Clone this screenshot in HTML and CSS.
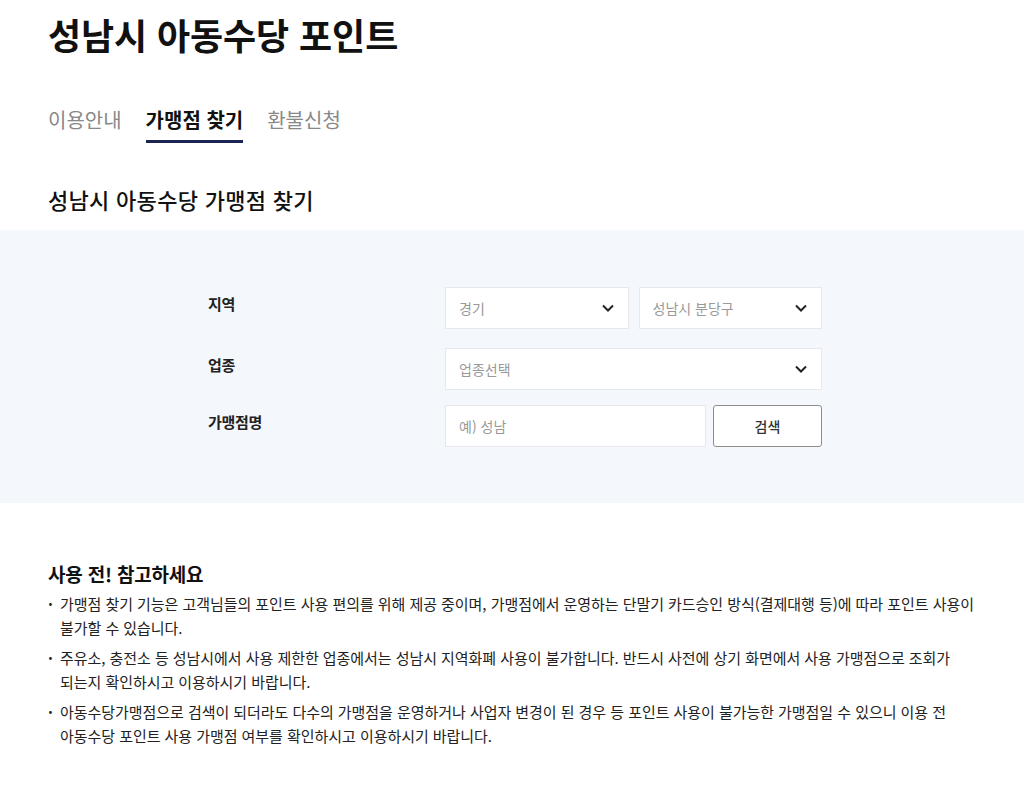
FILE: index.html
```html
<!DOCTYPE html>
<html lang="ko">
<head>
<meta charset="utf-8">
<title>성남시 아동수당 포인트</title>
<link rel="stylesheet" href="styles.css">
</head>
<body>
<div class="wrap">
  <h1 class="title">성남시 아동수당 포인트</h1>
  <nav class="tabs">
    <a class="tab">이용안내</a>
    <a class="tab active">가맹점 찾기</a>
    <a class="tab">환불신청</a>
  </nav>
  <h2 class="subtitle">성남시 아동수당 가맹점 찾기</h2>
</div>
<section class="band">
  <form class="form">
    <div class="row r1">
      <div class="label">지역</div>
      <div class="controls">
        <div class="select half"><span>경기</span><svg class="chev" viewBox="0 0 12 8"><path d="M1 1.5 6 6.5 11 1.5"/></svg></div>
        <div class="select half"><span>성남시 분당구</span><svg class="chev" viewBox="0 0 12 8"><path d="M1 1.5 6 6.5 11 1.5"/></svg></div>
      </div>
    </div>
    <div class="row r2">
      <div class="label">업종</div>
      <div class="controls">
        <div class="select full"><span>업종선택</span><svg class="chev" viewBox="0 0 12 8"><path d="M1 1.5 6 6.5 11 1.5"/></svg></div>
      </div>
    </div>
    <div class="row r3">
      <div class="label">가맹점명</div>
      <div class="controls tight">
        <div class="input"><span>예) 성남</span></div>
        <button type="button" class="btn">검색</button>
      </div>
    </div>
  </form>
</section>
<div class="wrap notes">
  <h3 class="notes-title">사용 전! 참고하세요</h3>
  <ul class="list">
    <li>가맹점 찾기 기능은 고객님들의 포인트 사용 편의를 위해 제공 중이며, 가맹점에서 운영하는 단말기 카드승인 방식(결제대행 등)에 따라 포인트 사용이 불가할 수 있습니다.</li>
    <li>주유소, 충전소 등 성남시에서 사용 제한한 업종에서는 성남시 지역화폐 사용이 불가합니다. 반드시 사전에 상기 화면에서 사용 가맹점으로 조회가 되는지 확인하시고 이용하시기 바랍니다.</li>
    <li>아동수당가맹점으로 검색이 되더라도 다수의 가맹점을 운영하거나 사업자 변경이 된 경우 등 포인트 사용이 불가능한 가맹점일 수 있으니 이용 전 아동수당 포인트 사용 가맹점 여부를 확인하시고 이용하시기 바랍니다.</li>
  </ul>
</div>
</body>
</html>
```
FILE: styles.css
```css
* { box-sizing: border-box; }
html, body { margin: 0; padding: 0; background: #fff; }
body {
  font-family: "Noto Sans CJK KR", "Noto Sans", sans-serif;
  color: #111;
  word-break: keep-all;
}
.wrap { padding: 0 48px; }
.title {
  margin: 0;
  padding-top: 10px;
  font-size: 36px;
  line-height: 48px;
  font-weight: 700;
  letter-spacing: -0.1px;
  color: #111;
}
.tabs {
  display: flex;
  gap: 24px;
  margin-top: 48px;
}
.tab {
  font-size: 20px;
  line-height: 28px;
  color: #888;
  padding-bottom: 6px;
  border-bottom: 3px solid transparent;
}
.tab.active {
  color: #111;
  font-weight: 700;
  border-bottom-color: #1b2452;
}
.subtitle {
  margin: 40px 0 0;
  font-size: 22px;
  line-height: 32px;
  font-weight: 500;
  letter-spacing: 0.3px;
}
.band {
  margin-top: 15px;
  background: #f4f7fb;
  padding: 57px 0 56px;
}
.form {
  width: 620px;
  padding-left: 5px;
  margin: 0 auto;
  display: flex;
  flex-direction: column;
}
.row { display: flex; align-items: center; }
.r2 { margin-top: 19px; }
.r3 { margin-top: 15px; }
.label {
  width: 238px;
  padding-left: 1px;
  font-size: 15px;
  letter-spacing: -0.3px;
  font-weight: 700;
  color: #222;
  padding-bottom: 9px;
}
.controls { display: flex; gap: 10px; flex: 1; }
.controls.tight { gap: 7px; }
.select, .input {
  height: 42px;
  background: #fff;
  border: 1px solid #e6e8ec;
  display: flex;
  align-items: center;
  justify-content: space-between;
  padding: 0 14px 0 13px;
  font-size: 14px;
  color: #999;
}
.half { flex: 1; }
.full { flex: 1; }
.input { width: 261px; }
.chev {
  width: 12px;
  height: 8px;
  fill: none;
  stroke: #222;
  stroke-width: 2;
}
.btn {
  flex: 1;
  height: 42px;
  background: #fff;
  border: 1px solid #8c8c8c;
  border-radius: 3px;
  font-family: inherit;
  font-size: 14px;
  color: #333;
  font-weight: 500;
}
.notes { padding-top: 58px; padding-right: 42px; }
.notes-title {
  margin: 0;
  font-size: 19px;
  line-height: 26px;
  font-weight: 700;
  letter-spacing: -0.2px;
}
.list {
  list-style: none;
  margin: 5px 0 0;
  padding: 0;
}
.list li {
  position: relative;
  padding-left: 12px;
  font-size: 15px;
  line-height: 24px;
  letter-spacing: -0.05px;
  color: #222;
  margin-bottom: 6px;
}
.list li::before {
  content: "·";
  position: absolute;
  left: 0;
  top: 0;
  font-weight: 700;
}
```
